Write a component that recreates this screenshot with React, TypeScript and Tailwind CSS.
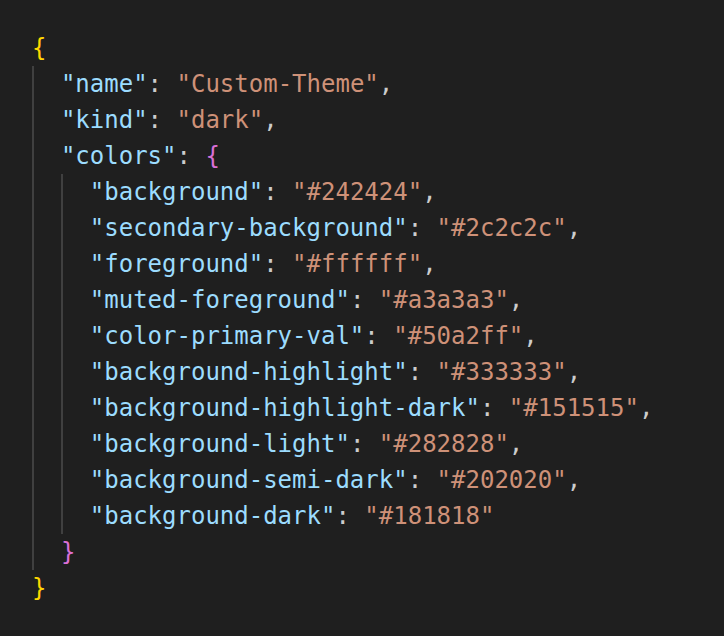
import React from "react";

type Tok = { t: string; c: "key" | "str" | "p" | "b1" | "b2" };

const COLORS: Record<Tok["c"], string> = {
  key: "text-[#9cdcfe]",
  str: "text-[#ce9178]",
  p: "text-[#cccccc]",
  b1: "text-[#ffd700]",
  b2: "text-[#da70d6]",
};

const THEME: Array<[string, string]> = [
  ["background", "#242424"],
  ["secondary-background", "#2c2c2c"],
  ["foreground", "#ffffff"],
  ["muted-foreground", "#a3a3a3"],
  ["color-primary-val", "#50a2ff"],
  ["background-highlight", "#333333"],
  ["background-highlight-dark", "#151515"],
  ["background-light", "#282828"],
  ["background-semi-dark", "#202020"],
  ["background-dark", "#181818"],
];

const pair = (k: string, v: string, last = false): Tok[] => [
  { t: `"${k}"`, c: "key" },
  { t: ": ", c: "p" },
  { t: `"${v}"`, c: "str" },
  ...(last ? [] : [{ t: ",", c: "p" } as Tok]),
];

// each line: number of indent guides shown, total indent in chars, tokens
const LINES: Array<{ guides: number; indent: number; toks: Tok[] }> = [
  { guides: 0, indent: 0, toks: [{ t: "{", c: "b1" }] },
  { guides: 1, indent: 2, toks: pair("name", "Custom-Theme") },
  { guides: 1, indent: 2, toks: pair("kind", "dark") },
  {
    guides: 1,
    indent: 2,
    toks: [
      { t: `"colors"`, c: "key" },
      { t: ": ", c: "p" },
      { t: "{", c: "b2" },
    ],
  },
  ...THEME.map(([k, v], i) => ({
    guides: 2,
    indent: 4,
    toks: pair(k, v, i === THEME.length - 1),
  })),
  { guides: 1, indent: 2, toks: [{ t: "}", c: "b2" }] },
  { guides: 0, indent: 0, toks: [{ t: "}", c: "b1" }] },
];

const Line = ({ guides, indent, toks }: { guides: number; indent: number; toks: Tok[] }) => (
  <div className="flex h-[36px] items-center whitespace-pre">
    {Array.from({ length: indent / 2 }).map((_, i) => (
      <span
        key={i}
        className={`inline-block h-[36px] w-[2ch] shrink-0 ${i < guides ? "border-l-2 border-[#404040]" : ""}`}
      />
    ))}
    {toks.map((tk, i) => (
      <span key={i} className={COLORS[tk.c]}>
        {tk.t}
      </span>
    ))}
  </div>
);

export default function App() {
  return (
    <div className="min-h-[636px] w-full bg-[#1f1f1f] pl-[32px] pt-[30px] font-['DejaVu_Sans_Mono',monospace] text-[24px] leading-[36px]">
      {LINES.map((l, i) => (
        <Line key={i} {...l} />
      ))}
    </div>
  );
}
